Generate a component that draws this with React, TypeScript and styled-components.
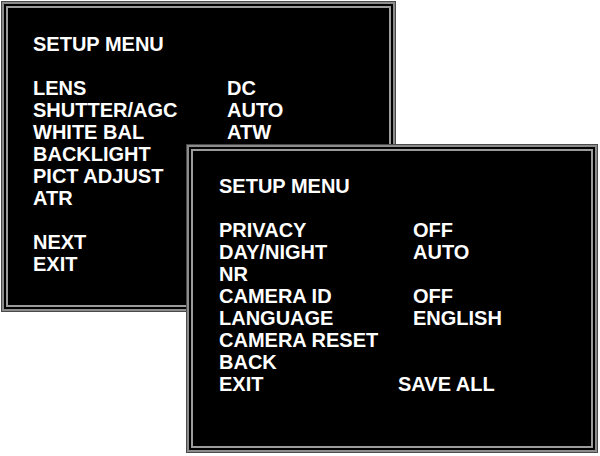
import React from 'react';
import styled, { createGlobalStyle } from 'styled-components';

interface MenuRow {
  label: string
  value?: string
  shift?: number
}

const firstMenu: MenuRow[] = [
  { label: 'LENS', value: 'DC' },
  { label: 'SHUTTER/AGC', value: 'AUTO' },
  { label: 'WHITE BAL', value: 'ATW' },
  { label: 'BACKLIGHT' },
  { label: 'PICT ADJUST' },
  { label: 'ATR' },
  { label: '' },
  { label: 'NEXT' },
  { label: 'EXIT' },
];

const secondMenu: MenuRow[] = [
  { label: 'PRIVACY', value: 'OFF' },
  { label: 'DAY/NIGHT', value: 'AUTO' },
  { label: 'NR' },
  { label: 'CAMERA ID', value: 'OFF' },
  { label: 'LANGUAGE', value: 'ENGLISH' },
  { label: 'CAMERA RESET' },
  { label: 'BACK' },
  { label: 'EXIT', value: 'SAVE ALL', shift: -15 },
];

function Menu({ rows }: { rows: MenuRow[] }) {
  return (
    <>
      <Title>SETUP MENU</Title>
      <Rows>
        {rows.map((row, index) => (
          <React.Fragment key={index}>
            <Cell>{row.label || '\u00a0'}</Cell>
            <Cell $shift={row.shift ?? 0}>{row.value ?? ''}</Cell>
          </React.Fragment>
        ))}
      </Rows>
    </>
  );
}

function App() {
  return (
    <>
      <GlobalStyle />
      <Desktop>
        <Screen $w={395} $h={311}>
          <Menu rows={firstMenu} />
        </Screen>
        <FrontScreen $w={412} $h={309}>
          <Menu rows={secondMenu} />
        </FrontScreen>
      </Desktop>
    </>
  );
}

export default App;

const GlobalStyle = createGlobalStyle`
  html, body {
    margin: 0;
    padding: 0;
    background: #fff;
  }
`;

const Desktop = styled.div`
  position: relative;
  width: 600px;
  height: 456px;
  overflow: hidden;
  padding: 1px 0 0 1px;
  box-sizing: border-box;
`;

const Screen = styled.div<{ $w: number; $h: number }>`
  width: ${p => p.$w}px;
  height: ${p => p.$h}px;
  box-sizing: border-box;
  background: #000;
  border: 1px solid #4a4a4a;
  box-shadow:
    inset 0 0 0 2px #8c8c8c,
    inset 0 0 0 4px #000,
    inset 0 0 0 6px #9c9c9c;
  padding: 31px 0 0 31px;
  font-family: "Liberation Sans", Arial, sans-serif;
  font-weight: bold;
  font-size: 20px;
  line-height: 22px;
  color: #fff;
`;

const FrontScreen = styled(Screen)`
  position: absolute;
  left: 186px;
  top: 144px;
  padding: 30px 0 0 32px;
`;

const Title = styled.div`
  margin-bottom: 22px;
  white-space: nowrap;
`;

const Rows = styled.div`
  display: grid;
  grid-template-columns: 194px auto;
  grid-auto-rows: 22px;
`;

const Cell = styled.div<{ $shift?: number }>`
  white-space: nowrap;
  margin-left: ${p => p.$shift ?? 0}px;
`;
